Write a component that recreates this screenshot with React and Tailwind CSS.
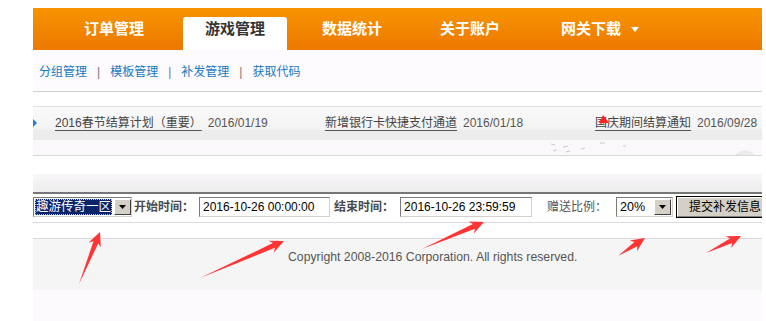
import React from "react";

function arrowPoints(tx, ty, px, py) {
  const dx = px - tx, dy = py - ty;
  const L = Math.hypot(dx, dy);
  const ux = dx / L, uy = dy / L;
  const nx = -uy, ny = ux;
  const hl = 14, hw = 6.5, sw = 2.6;
  const bx = px - ux * hl, by = py - uy * hl;
  const cx = px - ux * (hl - 3), cy = py - uy * (hl - 3);
  const pts = [
    [tx, ty],
    [cx + nx * sw, cy + ny * sw],
    [bx + nx * hw, by + ny * hw],
    [px, py],
    [bx - nx * hw, by - ny * hw],
    [cx - nx * sw, cy - ny * sw],
  ];
  return pts.map((p) => p.map((v) => v.toFixed(1)).join(",")).join(" ");
}

const arrows = [
  [79, 284, 100, 232],
  [200, 278, 284, 241],
  [422, 249, 484, 222],
  [618, 256, 645, 238],
  [706, 253, 741, 236],
];

function NavItem({ children, active, className = "" }) {
  return (
    <div
      className={
        "h-[33px] flex justify-center pt-[3px] text-[15px] font-bold leading-[18px] " +
        (active ? "bg-white text-[#333] rounded-t-[3px] " : "text-white ") +
        className
      }
    >
      {children}
    </div>
  );
}

function Sep() {
  return <span className="mx-[10px] text-[#777]">|</span>;
}

function Notice({ title, date }) {
  return (
    <div className="w-[270px] shrink-0 flex items-center whitespace-nowrap">
      <span className="text-[#444] underline underline-offset-[3px] decoration-[#555]">{title}</span>
      <span className="ml-[6px] text-[#555]">{date}</span>
    </div>
  );
}

function Input({ value, w }) {
  return (
    <div
      className={
        "h-[20px] bg-white border border-[#7a7a7a] border-r-[#d4d0c8] border-b-[#d4d0c8] flex items-center pl-[3px] text-[12px] text-black whitespace-nowrap " +
        w
      }
    >
      {value}
    </div>
  );
}

function DropBtn() {
  return (
    <div className="w-[17px] h-[16px] bg-[#d4d0c8] border border-white border-r-[#404040] border-b-[#404040] flex items-center justify-center">
      <svg width="7" height="4" viewBox="0 0 7 4">
        <polygon points="0,0 7,0 3.5,4" fill="#000" />
      </svg>
    </div>
  );
}

export default function App() {
  return (
    <div className="relative w-[766px] h-[321px] overflow-hidden bg-white font-['Liberation_Sans','Noto_Sans_CJK_SC',sans-serif] text-[12px]">
      <div className="ml-[33px] w-[729px] pt-[8px] overflow-hidden">
        {/* top nav */}
        <div className="h-[42px] bg-[linear-gradient(to_bottom,#f79400,#ed7800)] flex items-end pl-[22px]">
          <NavItem className="w-[118px]">订单管理</NavItem>
          <NavItem active className="w-[104px] ml-[10px] mr-[6px]">游戏管理</NavItem>
          <NavItem className="w-[118px]">数据统计</NavItem>
          <NavItem className="w-[118px]">关于账户</NavItem>
          <NavItem className="w-[140px] !justify-start pl-[32px] gap-[10px]">
            <span>网关下载</span>
            <svg width="8" height="5" viewBox="0 0 8 5" className="mt-[7px]">
              <polygon points="0,0 8,0 4,5" fill="#fff" />
            </svg>
          </NavItem>
        </div>

        {/* sub nav */}
        <div className="h-[42px] bg-[#fdfbfd] border-b border-[#cfcfcf] flex items-center pl-[6px] pt-[2px] text-[12px] text-[#1679c4] whitespace-nowrap">
          <span>分组管理</span>
          <Sep />
          <span>模板管理</span>
          <Sep />
          <span>补发管理</span>
          <Sep />
          <span>获取代码</span>
        </div>

        {/* spacer */}
        <div className="h-[15px] bg-white border-b border-[#e2e0e2]" />

        {/* notices */}
        <div className="relative h-[33px] bg-[linear-gradient(to_bottom,#fbfafb_0px,#f4f3f4_22px,#ececec_23px,#ececec_33px)] flex items-center pl-[22px] pb-[2px] text-[12px]">
          <svg width="4" height="8" viewBox="0 0 4 8" className="absolute left-0 top-[12px]">
            <polygon points="0,0 4,4 0,8" fill="#2a7bd3" />
          </svg>
          <Notice title="2016春节结算计划（重要）" date="2016/01/19" />
          <Notice title="新增银行卡快捷支付通道" date="2016/01/18" />
          <Notice title="国庆期间结算通知" date="2016/09/28" />
        </div>

        <div className="relative h-[16px] bg-[#faf8fa] border-b border-[#d9d9d9]">
          <svg width="729" height="16" className="absolute left-0 top-0" viewBox="0 0 729 16">
            <g stroke="#b9b9b9" strokeWidth="1" opacity="0.7">
              <line x1="518" y1="4" x2="522" y2="5" />
              <line x1="530" y1="7" x2="535" y2="6" />
              <line x1="520" y1="11" x2="524" y2="10" />
              <line x1="533" y1="12" x2="537" y2="11" />
              <line x1="548" y1="9" x2="552" y2="8" />
              <line x1="567" y1="3" x2="572" y2="3" />
              <line x1="590" y1="6" x2="593" y2="6" />
            </g>
            <path d="M702 15 Q708 9 716 11 L722 15 Z" fill="#ebe9eb" />
          </svg>
        </div>

        <div className="h-[18px] bg-white" />
        <div className="h-[18px] bg-[linear-gradient(to_bottom,#f9f7f9,#eeeeee)]" />
        <div className="h-[2px] bg-[#767676]" />

        {/* form */}
        <div className="h-[29px] bg-white border-b border-[#dedbde] flex items-center pb-[2px] whitespace-nowrap">
          <div className="w-[100px] h-[20px] bg-white border border-[#7a7a7a] border-r-[#d4d0c8] border-b-[#d4d0c8] flex items-center pl-[1px]">
            <div className="h-[16px] w-[77px] bg-[#0a246a] border border-dotted border-[#d8c870] text-white text-[12.5px] leading-[14px] flex items-center">
              趣游传奇一区
            </div>
            <div className="ml-[2px]">
              <DropBtn />
            </div>
          </div>
          <span className="ml-[2px] font-bold text-[#4a4a4a]">开始时间：</span>
          <div className="ml-[5px]">
            <Input value="2016-10-26 00:00:00" w="w-[131px]" />
          </div>
          <span className="ml-[4px] font-bold text-[#4a4a4a]">结束时间：</span>
          <div className="ml-[6px]">
            <Input value="2016-10-26 23:59:59" w="w-[132px]" />
          </div>
          <span className="ml-[15px] text-[#555]">赠送比例：</span>
          <div className="ml-[9px] w-[57px] shrink-0 h-[20px] bg-white border border-[#7a7a7a] border-r-[#d4d0c8] border-b-[#d4d0c8] flex items-center pl-[3px] text-[12.5px] text-black">
            <span className="flex-1">20%</span>
            <div className="mr-[1px]">
              <DropBtn />
            </div>
          </div>
          <div className="ml-[3px] h-[22px] w-[110px] shrink-0 border border-black">
            <div className="h-full bg-[#d4d0c8] border border-white border-r-[#808080] border-b-[#808080] flex items-center pl-[11px] text-[12px] text-black">
              提交补发信息
            </div>
          </div>
        </div>

        <div className="h-[16px] bg-white border-b border-[#ddd8dd]" />

        {/* footer */}
        <div className="h-[51px] bg-[#f5f5f5] pl-[255px] pt-[9px] text-[12.25px] text-[#555] whitespace-nowrap">
          Copyright 2008-2016 Corporation. All rights reserved.
        </div>
        <div className="h-[40px] bg-[#fdfafd]" />
      </div>

      {/* annotation arrows */}
      <svg className="absolute left-0 top-0 pointer-events-none" width="766" height="321" viewBox="0 0 766 321">
        {arrows.map((a, i) => (
          <polygon key={i} points={arrowPoints(a[0], a[1], a[2], a[3])} fill="#ff3535" />
        ))}
        <polygon points="599,123 603,115 609,123" fill="#f22" />
      </svg>
    </div>
  );
}
